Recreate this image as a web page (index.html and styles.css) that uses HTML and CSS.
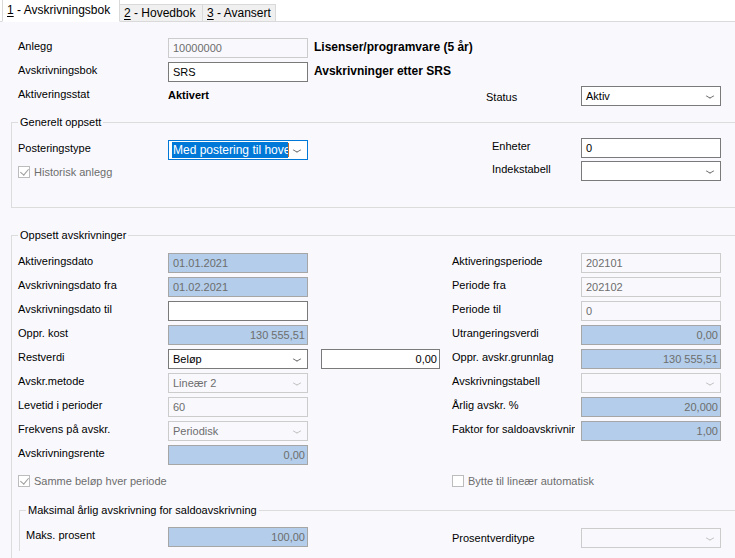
FILE: index.html
```html
<!DOCTYPE html>
<html lang="no">
<head>
  <meta charset="UTF-8" />
  <title>Avskrivningsbok</title>
  <link rel="stylesheet" href="styles.css">
</head>
<body>

<div class="tabs">
  <div class="tab active"><u>1</u> - Avskrivningsbok</div>
  <div class="tab t2"><u>2</u> - Hovedbok</div>
  <div class="tab t3"><u>3</u> - Avansert</div>
</div>

<div class="page">

  <div class="top">
    <div class="lbl c1">Anlegg</div>
    <div class="fld off c2">10000000</div>
    <div class="strong c4">Lisenser/programvare (5 år)</div>

    <div class="lbl c1">Avskrivningsbok</div>
    <div class="fld c2">SRS</div>
    <div class="strong c4">Avskrivninger etter SRS</div>

    <div class="lbl c1">Aktiveringsstat</div>
    <div class="strong c2">Aktivert</div>
    <div class="lbl c5 low">Status</div>
    <div class="fld sel c6">Aktiv<span class="chev"></span></div>
  </div>

  <fieldset class="group general">
    <legend>Generelt oppsett</legend>
    <div class="gen-grid">
      <div class="lbl lift">Posteringstype</div>
      <div class="fld sel focus lift"><span class="hl">Med postering til hovedbok</span><span class="caret"></span><span class="chev"></span></div>
      <div class="lbl c4">Enheter</div>
      <div class="fld c5">0</div>

      <div class="check off c1"><span class="box on"></span>Historisk anlegg</div>
      <div class="lbl c4">Indekstabell</div>
      <div class="fld sel c5"><span class="chev"></span></div>
    </div>
  </fieldset>

  <fieldset class="group setup">
    <legend>Oppsett avskrivninger</legend>
    <div class="set-grid">
      <div class="lbl">Aktiveringsdato</div>
      <div class="fld ro">01.01.2021</div>
      <div class="lbl r1">Aktiveringsperiode</div>
      <div class="fld off r2">202101</div>

      <div class="lbl">Avskrivningsdato fra</div>
      <div class="fld ro">01.02.2021</div>
      <div class="lbl r1">Periode fra</div>
      <div class="fld off r2">202102</div>

      <div class="lbl">Avskrivningsdato til</div>
      <div class="fld"></div>
      <div class="lbl r1">Periode til</div>
      <div class="fld off r2">0</div>

      <div class="lbl">Oppr. kost</div>
      <div class="fld ro num">130 555,51</div>
      <div class="lbl r1">Utrangeringsverdi</div>
      <div class="fld ro num r2">0,00</div>

      <div class="lbl">Restverdi</div>
      <div class="fld sel">Beløp<span class="chev"></span></div>
      <div class="fld num extra">0,00</div>
      <div class="lbl r1">Oppr. avskr.grunnlag</div>
      <div class="fld ro num r2">130 555,51</div>

      <div class="lbl">Avskr.metode</div>
      <div class="fld sel off">Lineær 2<span class="chev"></span></div>
      <div class="lbl r1">Avskrivningstabell</div>
      <div class="fld sel off r2"><span class="chev"></span></div>

      <div class="lbl">Levetid i perioder</div>
      <div class="fld off">60</div>
      <div class="lbl r1">Årlig avskr. %</div>
      <div class="fld ro num r2">20,000</div>

      <div class="lbl">Frekvens på avskr.</div>
      <div class="fld sel off">Periodisk<span class="chev"></span></div>
      <div class="lbl r1 clip">Faktor for saldoavskrivning</div>
      <div class="fld ro num r2">1,00</div>

      <div class="lbl">Avskrivningsrente</div>
      <div class="fld ro num">0,00</div>
    </div>

    <div class="checks">
      <div class="check off"><span class="box on"></span>Samme beløp hver periode</div>
      <div class="check off"><span class="box"></span>Bytte til lineær automatisk</div>
    </div>

    <fieldset class="group inner">
      <legend>Maksimal årlig avskrivning for saldoavskrivning</legend>
      <div class="max-grid">
        <div class="lbl">Maks. prosent</div>
        <div class="fld ro num">100,00</div>
        <div class="lbl c4 low">Prosentverditype</div>
        <div class="fld sel off c5"><span class="chev"></span></div>
      </div>
    </fieldset>
  </fieldset>

</div>

</body>
</html>
```

FILE: styles.css
```css
* { box-sizing: border-box; }
html, body { margin: 0; padding: 0; }
body { width: 735px; height: 558px; overflow: hidden; background: #f9f9fd; color: #000; font-family: "Liberation Sans", Arial, sans-serif; font-size: 11px; }

/* tabs */
.tabs { height: 22px; background: #fff; border-bottom: 1px solid #dadada; display: flex; align-items: flex-end; padding-left: 2px; }
.tab { height: 18px; margin-bottom: -1px; border: 1px solid #d9d9d9; border-bottom: 1px solid #dadada; background: #f0f0f0; font-size: 12px; line-height: 16px; padding-left: 4px; white-space: nowrap; }
.tab.active { height: 23px; width: 118px; background: #fff; border-bottom-color: #fff; padding-top: 2px; line-height: 17px; }
.tab.t2 { width: 83px; border-left: none; }
.tab.t3 { width: 73px; border-left: none; }
.tab u { text-decoration: underline; text-underline-offset: 2px; }

/* common controls */
.lbl { line-height: 14px; padding-top: 1px; white-space: nowrap; }
.lbl.clip { overflow: hidden; width: 123px; }
.lbl.low { padding-top: 4px; }
.strong { font-weight: bold; line-height: 14px; padding-top: 2px; white-space: nowrap; }
.strong.c4 { font-size: 12px; }
.fld { position: relative; height: 20px; border: 1px solid #7a7a7a; background: #fff; padding: 0 4px; line-height: 18px; white-space: nowrap; overflow: hidden; }
.fld.off { border-color: #cccccc; background: #f9f9fd; color: #6d6d6d; }
.fld.ro { border-color: #a6a6a6; background: #b3cdea; color: #6d6d6d; }
.fld.num { text-align: right; padding-right: 2px; }
.fld.sel { padding-right: 20px; }
.fld.focus { border-color: #0078d7; padding-left: 3px; font-size: 12px; }
.hl { background: #0078d7; color: #fff; display: inline-block; vertical-align: top; margin-top: 1px; line-height: 16px; padding-left: 1px; width: 116px; overflow: hidden; }
.caret { position: absolute; left: 119px; top: 2px; width: 1px; height: 14px; background: #c36a2a; }
.chev { position: absolute; right: 7px; top: 6px; width: 6px; height: 6px; border-right: 1px solid #606060; border-bottom: 1px solid #606060; transform: scaleY(0.6) rotate(45deg); }
.off .chev { border-color: #bdbdbd; }

.check { display: flex; align-items: center; height: 14px; white-space: nowrap; }
.check.off { color: #6d6d6d; }
.box { width: 12px; height: 12px; border: 1px solid #bcbcbc; background: #fff; margin-right: 4px; position: relative; }
.box.on::after { content: ""; position: absolute; left: 3px; top: 0px; width: 4px; height: 7px; border-right: 1px solid #9b9b9b; border-bottom: 1px solid #9b9b9b; transform: rotate(40deg); }

/* top section */
.page { padding-top: 16px; }
.top { display: grid; grid-template-columns: 150px 140px 6px 172px 95px 140px; grid-auto-rows: 20px; row-gap: 4px; padding-left: 18px; }
.top .c1 { grid-column: 1; }
.top .c2 { grid-column: 2; }
.top .c4 { grid-column: 4 / span 2; }
.top .c5 { grid-column: 5; }
.top .c6 { grid-column: 6; }

/* group boxes */
.group { border: 1px solid #dcdcdc; border-right: none; padding: 0; margin: 0 0 0 11px; }
.group legend { font-size: 11px; line-height: 14px; padding: 0 2px; margin-left: 6px; }
.general { margin-top: 9px; height: 93px; }
.gen-grid { display: grid; grid-template-columns: 150px 140px 184px 89px 140px; grid-template-rows: 20px 20px; row-gap: 3px; padding: 9px 0 0 6px; }
.gen-grid .lift { margin-top: 2px; }
.gen-grid .c1 { grid-column: 1 / span 2; align-self: end; margin-bottom: 2px; }
.gen-grid .c4 { grid-column: 4; }
.gen-grid .c5 { grid-column: 5; }

.setup { margin-top: 20px; height: 330px; border-bottom: none; }
.set-grid { display: grid; grid-template-columns: 150px 140px 13px 119px 12px 129px 140px; grid-auto-rows: 20px; row-gap: 4px; padding: 11px 0 0 6px; }
.set-grid > .lbl { grid-column: 1; }
.set-grid > .fld { grid-column: 2; }
.set-grid > .extra { grid-column: 4; }
.set-grid > .r1 { grid-column: 6; }
.set-grid > .r2 { grid-column: 7; }

.checks { display: grid; grid-template-columns: 434px 270px; padding: 9px 0 0 6px; }

.inner { margin: 15px 0 0 7px; height: 48px; border-bottom: none; }
.max-grid { display: grid; grid-template-columns: 142px 140px 144px 129px 140px; grid-auto-rows: 20px; padding: 10px 0 0 6px; }
.max-grid .c4 { grid-column: 4; }
.max-grid .c5 { grid-column: 5; margin-top: 1px; }
```
